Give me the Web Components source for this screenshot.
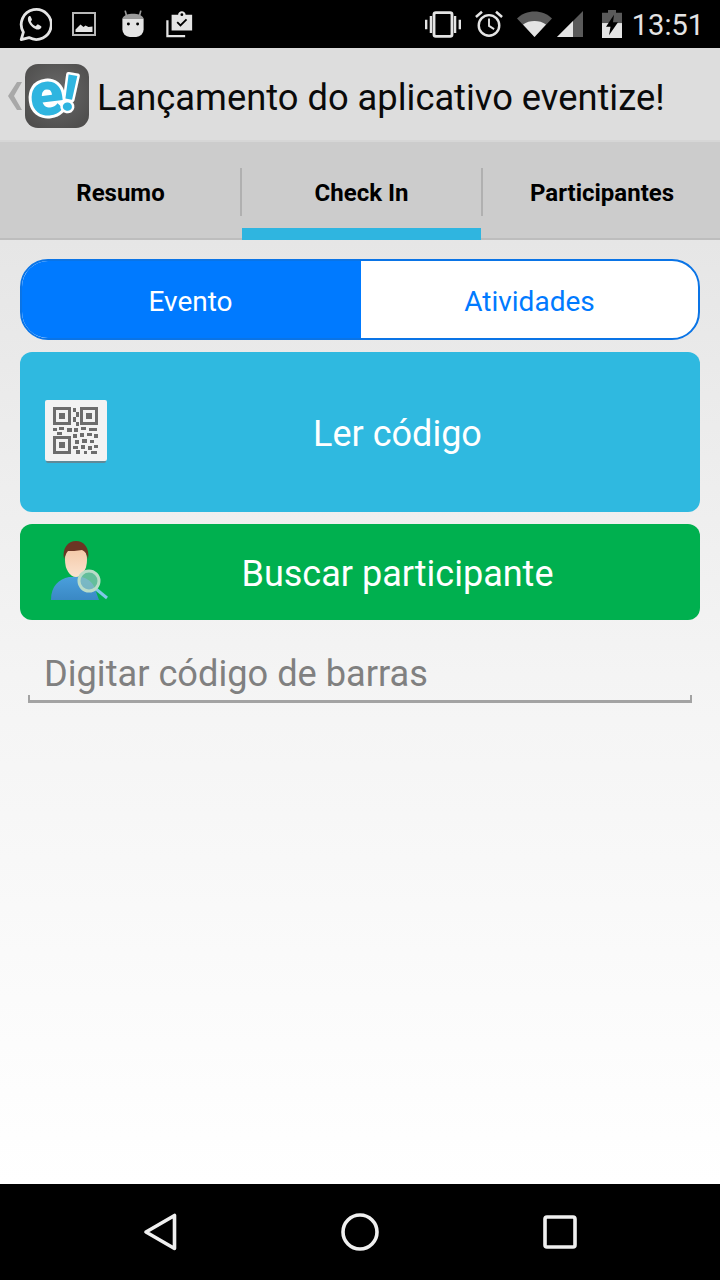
<!DOCTYPE html>
<html lang="pt">
<head>
<meta charset="utf-8">
<title>Check In</title>
<style>
  html, body { margin: 0; padding: 0; height: 100%; background: #fff; }
  body { font-family: Roboto, "Liberation Sans", sans-serif; }
</style>
</head>
<body>
<app-screen>
  <status-bar slot="top" time="13:51"></status-bar>
  <event-header slot="top" title="Lançamento do aplicativo eventize!"></event-header>
  <tab-bar slot="top" labels="Resumo|Check In|Participantes" active="1"></tab-bar>
  <segmented-control left="Evento" right="Atividades"></segmented-control>
  <action-button color="#2fb9e0" height="160" icon="qr">Ler código</action-button>
  <action-button color="#00b04f" height="96" icon="person">Buscar participante</action-button>
  <barcode-input placeholder="Digitar código de barras"></barcode-input>
  <nav-bar slot="bottom"></nav-bar>
</app-screen>

<script>
class AppScreen extends HTMLElement {
  connectedCallback() {
    const root = this.attachShadow({ mode: 'open' });
    root.innerHTML = `
    <style>
      :host { display: flex; flex-direction: column; width: 720px; height: 1280px; overflow: hidden; }
      .body {
        flex: 1; display: flex; flex-direction: column; gap: 12px; padding: 19px 20px 0;
        background: linear-gradient(#e6e6e6 0, #f4f4f4 46%, #ffffff 100%);
      }
    </style>
    <slot name="top"></slot>
    <main class="body"><slot></slot></main>
    <slot name="bottom"></slot>`;
  }
}

class StatusBar extends HTMLElement {
  connectedCallback() {
    const root = this.attachShadow({ mode: 'open' });
    root.innerHTML = `
    <style>
      :host { display: flex; align-items: center; justify-content: space-between; height: 48px; background: #000; color: #e4e4e4; }
      .group { display: flex; align-items: center; }
      .left { padding-left: 18px; gap: 16px; }
      .right { padding-right: 16px; }
      svg { display: block; }
      .time { font-size: 29px; font-weight: 400; margin-left: 10px; padding-top: 2px; }
    </style>
    <div class="group left">
      <svg width="34" height="36" viewBox="0 0 34 36" fill="none">
        <path d="M3.2 33.6 5.4 26.2A15 15 0 1 1 11 31.6Z" stroke="#e4e4e4" stroke-width="2.8" stroke-linejoin="round"/>
        <path d="M11.6 9.8c-1.4.6-2 2.4-1.6 4.4.8 3.6 4.6 8 8.6 9.2 2 .6 3.8-.2 4.6-1.6.4-.8.2-1.4-.4-1.8l-2.6-1.4c-.6-.2-1-.2-1.4.4l-1 1.2c-2.2-.8-4-2.6-5-4.8l.8-1c.4-.4.4-.8.2-1.4l-1.2-2.6c-.2-.6-.8-.8-1.6-.6Z" fill="#e4e4e4"/>
      </svg>
      <svg width="24" height="24" viewBox="0 0 24 24" style="margin-left:4px">
        <rect x="1" y="1" width="22" height="22" fill="none" stroke="#b9b9b9" stroke-width="2"/>
        <path d="M3.5 20v-2.5l5-5 3 2.5 2-1.5 3 1.5 4-.5V20Z" fill="#e4e4e4"/>
      </svg>
      <svg width="24" height="28" viewBox="0 0 26 30" style="margin-left:9px">
        <path d="M6 6 4.5 0.5M20 6l1.500-5.500" stroke="#9a9a9a" stroke-width="1.800"/>
        <path d="M1.500 9C3 5.500 8 4 13 4s10 1.500 11.500 5Z" fill="#9a9a9a"/>
        <path d="M1.500 9h23v12a8 8 0 0 1-8 8h-7a8 8 0 0 1-8-8Z" fill="#e4e4e4"/>
        <circle cx="8" cy="15" r="1.600" fill="#000"/><circle cx="18" cy="15" r="1.600" fill="#000"/>
      </svg>
      <svg width="28" height="28" viewBox="0 0 30 30" style="margin-left:5px">
        <path d="M1.500 11v17h19" fill="none" stroke="#e4e4e4" stroke-width="2.400"/>
        <path d="M6 5h7c0-5 8-5 8 0h7v17H6Z" fill="#e4e4e4"/>
        <circle cx="17" cy="5" r="1.500" fill="#000"/>
        <path d="m12 13 3.500 3.500L22 10" fill="none" stroke="#000" stroke-width="2"/>
      </svg>
    </div>
    <div class="group right">
      <svg width="36" height="27" viewBox="0 0 38 28">
        <rect x="9.500" y="1.500" width="19" height="25" rx="2" fill="none" stroke="#e4e4e4" stroke-width="3"/>
        <path d="M0 9h2.500v10H0ZM5 5h2.500v18H5ZM30.500 5H33v18h-2.500ZM35.500 9H38v10h-2.500Z" fill="#e4e4e4"/>
      </svg>
      <svg width="28" height="28" viewBox="0 0 30 30" fill="none" style="margin-left:14px">
        <circle cx="15" cy="16.500" r="11" stroke="#e4e4e4" stroke-width="2.600"/>
        <path d="M15 9v8l5.500 3.500" stroke="#e4e4e4" stroke-width="2"/>
        <path d="M1 7.500 7.500 2M29 7.500 22.500 2" stroke="#e4e4e4" stroke-width="2.800"/>
      </svg>
      <svg width="35" height="26" viewBox="0 0 32 26" preserveAspectRatio="none" style="margin-left:14px">
        <path d="M16 26 0 7.500C4 3 10 .5 16 .5s12 2.500 16 7Z" fill="#5a5a5a"/>
        <path d="M16 26 5.500 13.500C8.500 11 12 10 16 10s7.500 1 10.500 3.500Z" fill="#e4e4e4"/>
      </svg>
      <svg width="28" height="28" viewBox="0 0 28 28" style="margin-left:4px">
        <path d="M27 1v26H1Z" fill="#5a5a5a"/>
        <path d="M17 11v16H1Z" fill="#e4e4e4"/>
      </svg>
      <svg width="20" height="28" viewBox="0 0 20 30" preserveAspectRatio="none" style="margin-left:18px">
        <path d="M6 0h8v3h6v27H0V3h6Z" fill="#5a5a5a"/>
        <path d="M0 14h20v16H0Z" fill="#e4e4e4"/>
        <path d="M12 5 4 18h4.500L7 27l9-14h-5Z" fill="#000"/>
      </svg>
      <span class="time">${this.getAttribute('time')}</span>
    </div>`;
  }
}

class EventHeader extends HTMLElement {
  connectedCallback() {
    const root = this.attachShadow({ mode: 'open' });
    root.innerHTML = `
    <style>
      :host { display: flex; align-items: center; height: 92px; background: #dddddd; padding: 4px 0 0 8px; box-sizing: border-box; }
      svg { display: block; flex: none; overflow: visible; }
      .logo { width: 64px; height: 64px; margin-left: 3px; border-radius: 13px; background: radial-gradient(circle at 50% 45%, #6a6a6a 0, #4a4948 100%); }
      h1 { margin: 0 0 0 8px; padding-top: 3px; font-size: 36.3px; font-weight: 400; color: #0a0a0a; white-space: nowrap; }
      text { font-family: Roboto, "Liberation Sans", sans-serif; font-weight: 900; }
    </style>
    <svg width="14" height="28" viewBox="0 0 14 28"><path d="M14 0H9L0 14l9 14h5L6 14Z" fill="#a8a8a8"/></svg>
    <div class="logo">
      <svg width="64" height="64" viewBox="0 0 64 64">
        <text transform="rotate(-7 22 35)" x="5" y="51" font-size="62" fill="#2fb5e0" stroke="#fff" stroke-width="6" paint-order="stroke" stroke-linejoin="round">e</text>
        <text transform="rotate(10 48 28)" x="38" y="47" font-size="50" fill="#2fb5e0" stroke="#fff" stroke-width="5" paint-order="stroke" stroke-linejoin="round">!</text>
      </svg>
    </div>
    <h1>${this.getAttribute('title')}</h1>`;
    this.removeAttribute('title');
  }
}

class TabBar extends HTMLElement {
  connectedCallback() {
    const root = this.attachShadow({ mode: 'open' });
    const labels = this.getAttribute('labels').split('|');
    const active = parseInt(this.getAttribute('active') || '0', 10);
    root.innerHTML = `
    <style>
      :host { display: grid; grid-template-columns: 241px 241px 238px; height: 100px; box-sizing: border-box; background: #cccccc;
              border-top: 2px solid #d6d6d6; border-bottom: 2px solid #bdbdbd; }
      .tab { position: relative; display: flex; align-items: center; justify-content: center; padding-top: 6px; box-sizing: border-box;
             font-size: 24px; font-weight: 700; color: #000; }
      .tab:last-child { padding-left: 2px; }
      .tab + .tab::before { content: ''; position: absolute; left: -1px; top: 26px; width: 2px; height: 48px; background: #b0b0b0; }
      .tab.active::after { content: ''; position: absolute; left: 1px; right: 1px; bottom: -2px; height: 12px; background: #2fb5e0; }
    </style>
    ${labels.map((l, i) => `<div class="tab${i === active ? ' active' : ''}">${l}</div>`).join('')}`;
  }
}

class SegmentedControl extends HTMLElement {
  connectedCallback() {
    const root = this.attachShadow({ mode: 'open' });
    root.innerHTML = `
    <style>
      :host { display: grid; grid-template-columns: 339px 1fr; height: 81px; box-sizing: border-box; border-radius: 28px; overflow: hidden;
              border: 2px solid #0a74e6; background: #fff; font-size: 28px; }
      div { display: flex; align-items: center; justify-content: center; padding-top: 4px; }
      .on { background: #007aff; color: #fff; padding-right: 2px; }
      .off { color: #007aff; }
    </style>
    <div class="on">${this.getAttribute('left')}</div>
    <div class="off">${this.getAttribute('right')}</div>`;
  }
}

const ICONS = {
  qr: `<svg width="62" height="64" viewBox="0 0 62 64" style="filter:blur(.6px)">
    <rect x="1" y="3" width="60" height="60" rx="2" fill="#5f8a98"/>
    <rect x="0" y="0" width="62" height="61" rx="2" fill="#f3f3f3"/>
    <g fill="none" stroke="#6d6d6d" stroke-width="3">
      <rect x="9.500" y="8.500" width="15" height="15"/><rect x="36.500" y="8.500" width="15" height="15"/><rect x="9.500" y="37.500" width="15" height="15"/>
    </g>
    <path d="M14 13h6v6h-6ZM41 13h6v6h-6ZM14 42h6v6h-6Z" fill="#6d6d6d"/>
    <path d="M28 8h3v4h-3ZM31 12h3v5h-3ZM28 17h3v5h-3ZM31 22h3v4h-3ZM8 28h4v3H8ZM14 27h5v3h-5ZM22 28h5v4h-5ZM29 28h4v4h-4ZM36 27h5v3h-5ZM44 28h8v3h-8ZM12 32h5v3h-5ZM28 34h4v4h-4ZM35 33h4v4h-4ZM42 33h5v3h-5ZM49 34h4v4h-4ZM30 40h4v4h-4ZM37 39h5v4h-5ZM45 40h4v3h-4ZM28 46h5v3h-5ZM36 45h4v4h-4ZM43 46h4v4h-4ZM49 45h4v3h-4ZM31 50h4v4h-4ZM39 51h3v3h-3ZM46 51h6v3h-6Z" fill="#6d6d6d"/>
  </svg>`,
  person: `<svg width="60" height="64" viewBox="0 0 60 64" style="margin-left:5px;filter:blur(.6px)">
    <defs>
      <linearGradient id="skin" x1="0" y1="0" x2="0" y2="1"><stop offset="0" stop-color="#f2c39f"/><stop offset="1" stop-color="#fbe3cf"/></linearGradient>
      <linearGradient id="shirt" x1="0" y1="0" x2="0" y2="1"><stop offset="0" stop-color="#4a9fdc"/><stop offset="1" stop-color="#3a88c4"/></linearGradient>
    </defs>
    <path d="M1 60c0-14 8-21 18-23h12c6 1 12 5 14 12l4 11Z" fill="url(#shirt)"/>
    <ellipse cx="26" cy="20" rx="11" ry="17" fill="url(#skin)"/>
    <path d="M14 19C12 8 18 1 26 1s14 7 12 18c-1-5-3-8-6-9-5 1-11 1-14 1-2 2-3 5-4 8Z" fill="#6b3524"/>
    <path d="M46 49l11 9" stroke="#7fc7e8" stroke-width="3"/>
    <circle cx="39" cy="41" r="10" fill="#8fc4bc" fill-opacity=".7" stroke="#b9dcc8" stroke-width="3"/>
  </svg>`
};

class ActionButton extends HTMLElement {
  connectedCallback() {
    const root = this.attachShadow({ mode: 'open' });
    const h = this.getAttribute('height');
    root.innerHTML = `
    <style>
      :host { display: grid; grid-template-columns: 100px 1fr 25px; align-items: center; height: ${h}px; border-radius: 12px;
              background: ${this.getAttribute('color')}; color: #fff; font-size: 36px; }
      .icon { display: flex; justify-content: flex-start; padding-left: 25px; }
      .icon svg { display: block; }
      .label { text-align: center; padding-top: 4px; white-space: nowrap; }
    </style>
    <div class="icon">${ICONS[this.getAttribute('icon')]}</div>
    <div class="label"><slot></slot></div>`;
  }
}

class BarcodeInput extends HTMLElement {
  connectedCallback() {
    const root = this.attachShadow({ mode: 'open' });
    root.innerHTML = `
    <style>
      :host { display: block; margin: 6px 8px 0; }
      input { display: block; width: 100%; height: 65px; box-sizing: border-box; padding: 8px 0 0 16px; margin: 0; outline: 0; font: 400 36.2px Roboto, sans-serif; background: transparent;
              border: 0; border-bottom: 3px solid #a3a3a3; }
      .wrap { position: relative; }
      .wrap::before, .wrap::after { content: ''; position: absolute; bottom: 0; width: 2px; height: 8px; background: #a3a3a3; }
      .wrap::before { left: 0; } .wrap::after { right: 0; }
      input::placeholder { color: #808080; opacity: 1; }
    </style>
    <div class="wrap"><input type="text" placeholder="${this.getAttribute('placeholder')}"></div>`;
  }
}

class NavBar extends HTMLElement {
  connectedCallback() {
    const root = this.attachShadow({ mode: 'open' });
    root.innerHTML = `
    <style>
      :host { display: grid; grid-template-columns: 160px 200px 200px 160px; align-items: center; height: 96px; background: #000; box-sizing: border-box; }
      svg { display: block; justify-self: center; }
      .back { grid-column: 1 / span 2; justify-self: start; margin-left: 143px; }
      .home { grid-column: 2 / span 2; grid-row: 1; justify-self: center; }
      .rec { grid-column: 3 / span 2; grid-row: 1; justify-self: end; margin-right: 143px; }
    </style>
    <svg class="back" width="34" height="38" viewBox="0 0 34 38" style="grid-row:1"><path d="M31.500 2.500v33L3 19Z" fill="none" stroke="#f0f0f0" stroke-width="3.600" stroke-linejoin="round"/></svg>
    <svg class="home" width="38" height="38" viewBox="0 0 38 38"><circle cx="19" cy="19" r="17" fill="none" stroke="#f0f0f0" stroke-width="3.600"/></svg>
    <svg class="rec" width="34" height="34" viewBox="0 0 34 34"><rect x="2" y="2" width="30" height="30" rx="2" fill="none" stroke="#f0f0f0" stroke-width="3.600"/></svg>`;
  }
}

customElements.define('app-screen', AppScreen);
customElements.define('status-bar', StatusBar);
customElements.define('event-header', EventHeader);
customElements.define('tab-bar', TabBar);
customElements.define('segmented-control', SegmentedControl);
customElements.define('action-button', ActionButton);
customElements.define('barcode-input', BarcodeInput);
customElements.define('nav-bar', NavBar);
</script>
</body>
</html>
